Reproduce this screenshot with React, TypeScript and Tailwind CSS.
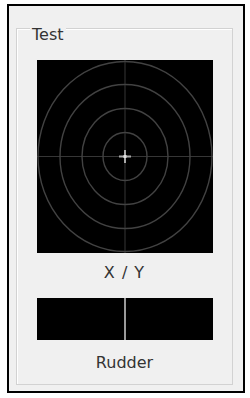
import React from "react";

const font = { fontFamily: '"DejaVu Sans", Verdana, sans-serif' };

function XYPad() {
  const rings = [
    [22, 24],
    [43, 48],
    [65, 72],
    [87, 95],
  ];
  return (
    <div className="w-[176px] h-[193px] bg-black shrink-0">
      <svg width="176" height="193" viewBox="0 0 176 193">
        <line x1="0" y1="96.5" x2="176" y2="96.5" stroke="#363636" strokeWidth="1" />
        <line x1="88" y1="0" x2="88" y2="193" stroke="#363636" strokeWidth="1" />
        {rings.map(([rx, ry], i) => (
          <ellipse key={i} cx="88" cy="96.5" rx={rx} ry={ry} fill="none" stroke="#424242" strokeWidth="1.4" />
        ))}
        <line x1="82" y1="96.5" x2="94" y2="96.5" stroke="#a8a8a8" strokeWidth="2" />
        <line x1="88" y1="90" x2="88" y2="103" stroke="#a8a8a8" strokeWidth="2" />
        <rect x="86.5" y="95" width="3" height="3" fill="#e0e0e0" />
      </svg>
    </div>
  );
}

export default function App() {
  return (
    <div className="w-[250px] h-[398px] bg-white pl-[7px] pt-[4px]" style={font}>
      <div className="w-[238px] h-[389px] border-2 border-black bg-[#f0f0f0] pl-[7px] pt-[22px]">
        <div className="relative w-[217px] h-[357px] border border-[#d2d2d2] shadow-[inset_1px_1px_0_#ffffff] flex flex-col items-center pt-[31px]">
          <span className="absolute left-[13px] top-[-3px] px-[2px] bg-[#f0f0f0] text-[16px] leading-[18px] text-[#333333]">
            Test
          </span>
          <XYPad />
          <div className="mt-[11px] text-[16px] leading-[18px] text-[#333333] tracking-[1px]">X / Y</div>
          <div className="mt-[16px] w-[176px] h-[42px] bg-black flex justify-center shrink-0">
            <div className="w-[2px] h-full bg-[#9a9a9a]" />
          </div>
          <div className="mt-[14px] text-[16px] leading-[18px] text-[#333333]">Rudder</div>
        </div>
      </div>
    </div>
  );
}
